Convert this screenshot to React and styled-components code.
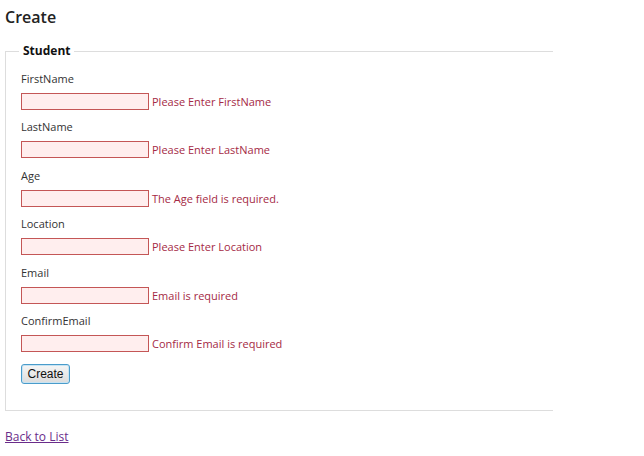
import styled, { createGlobalStyle } from 'styled-components';

const GlobalStyle = createGlobalStyle`
  html, body {
    margin: 0;
    padding: 0;
    background: #fff;
  }
  body {
    font-family: 'Open Sans', 'DejaVu Sans', sans-serif;
    color: #333;
  }
`;

const Page = styled.div`
  padding: 5px 0 0 5px;
  width: 548px;
`;

const Title = styled.h2`
  margin: 0 0 14px;
  font-size: 16px;
  font-weight: 600;
  color: #222;
  line-height: 24px;
`;

const Fieldset = styled.fieldset`
  margin: 0;
  padding: 0 0 26px 15px;
  border: 1px solid #ddd;
  border-right: none;
  min-inline-size: 0;
`;

const Legend = styled.legend`
  padding: 0 4px;
  margin-left: -2px;
  font-size: 12px;
  font-weight: 700;
  color: #111;
  line-height: 16px;
`;

const Field = styled.div`
  display: flex;
  flex-direction: column;
  margin-bottom: 9.4px;
  &:first-of-type {
    margin-top: 12px;
  }
`;

const Label = styled.label`
  font-size: 11px;
  line-height: 15px;
  color: #333;
  margin-bottom: 7px;
`;

const Row = styled.div`
  display: flex;
  align-items: center;
  gap: 3px;
`;

const Input = styled.input`
  box-sizing: border-box;
  width: 128px;
  height: 17px;
  margin: 0;
  padding: 0 2px;
  border: 1px solid #c45656;
  background: #ffeeee;
  outline: none;
`;

const Error = styled.span`
  font-size: 11px;
  line-height: 17px;
  color: #a52a45;
`;

const Button = styled.button`
  margin-top: 3px;
  width: 49px;
  height: 20px;
  padding: 0;
  font-family: 'Liberation Sans', Arial, sans-serif;
  font-size: 12px;
  color: #111;
  border: 1px solid #4a9ccb;
  border-radius: 3px;
  background: linear-gradient(#f6f6f6, #dcdcdc);
  box-shadow: inset 0 0 0 1px #c8e3f2;
`;

const BackLink = styled.a`
  display: inline-block;
  margin-top: 17px;
  font-size: 12px;
  color: #6a2c8a;
  text-decoration: underline;
`;

const fields = [
  { label: 'FirstName', error: 'Please Enter FirstName' },
  { label: 'LastName', error: 'Please Enter LastName' },
  { label: 'Age', error: 'The Age field is required.' },
  { label: 'Location', error: 'Please Enter Location' },
  { label: 'Email', error: 'Email is required' },
  { label: 'ConfirmEmail', error: 'Confirm Email is required' },
];

export default function App() {
  return (
    <Page>
      <GlobalStyle />
      <Title>Create</Title>
      <Fieldset>
        <Legend>Student</Legend>
        {fields.map(f => (
          <Field key={f.label}>
            <Label>{f.label}</Label>
            <Row>
              <Input />
              <Error>{f.error}</Error>
            </Row>
          </Field>
        ))}
        <Button>Create</Button>
      </Fieldset>
      <BackLink href="#">Back to List</BackLink>
    </Page>
  );
}
